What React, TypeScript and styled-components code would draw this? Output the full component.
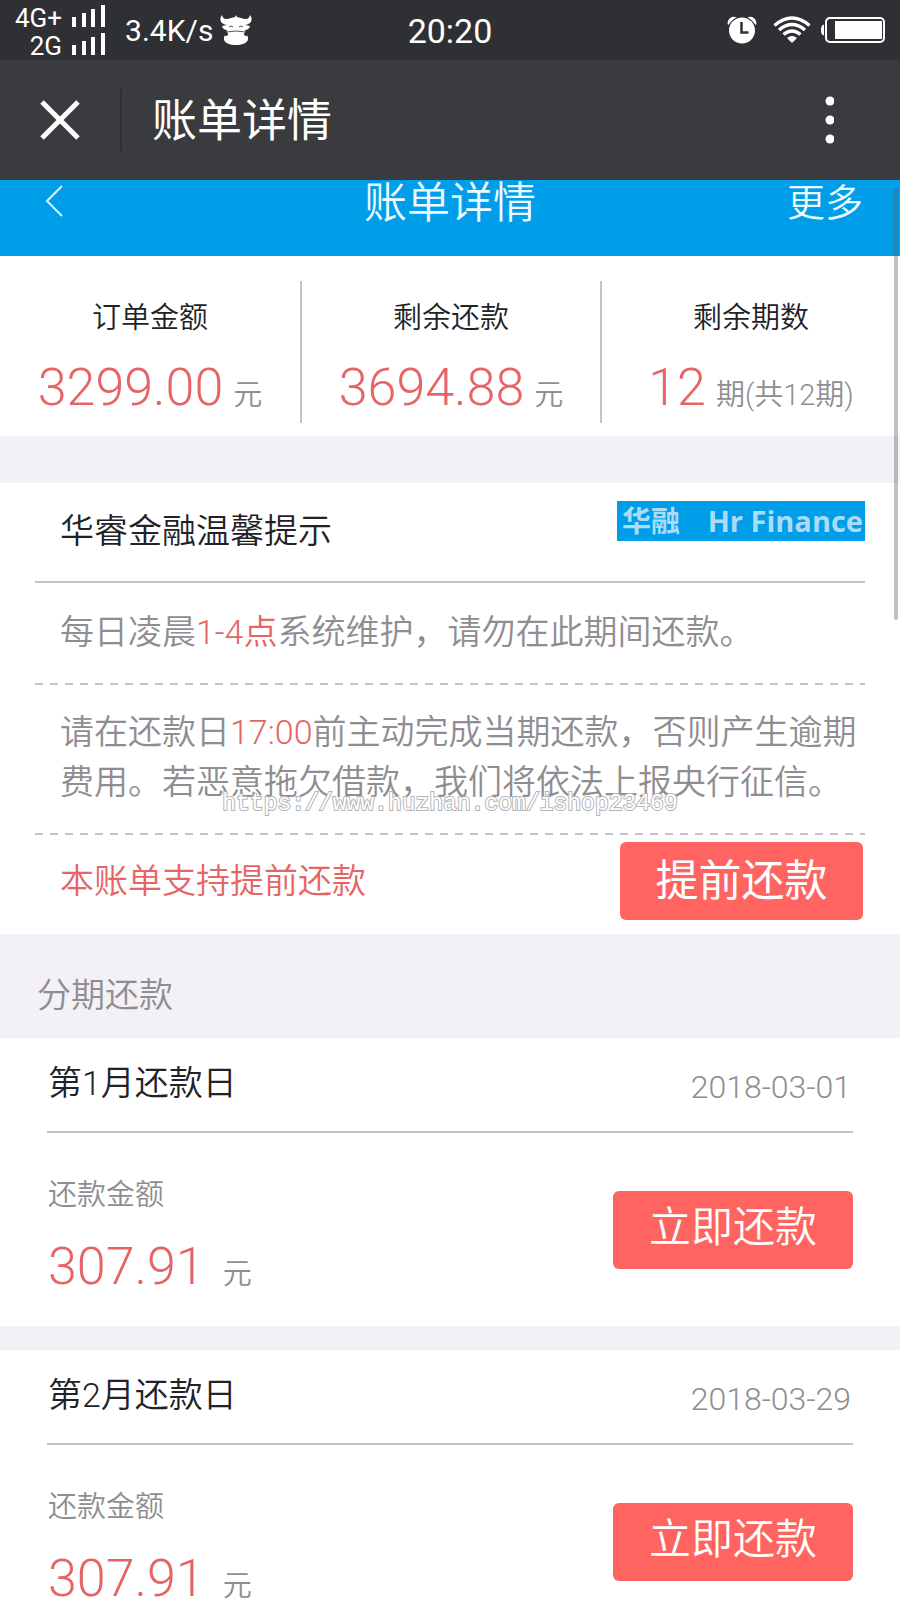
import React from "react";
import styled, { createGlobalStyle } from "styled-components";

const color = {
  statusBar: "#2f3033",
  navBar: "#3a3b3e",
  blue: "#009de9",
  coral: "#ff6461",
  red: "#e66464",
  ink: "#222226",
  muted: "#8e8e92",
  line: "#c4c4c7",
  gap: "#f3f1f5",
};

const GlobalStyle = createGlobalStyle`
  * { box-sizing: border-box; }
  body {
    margin: 0;
    background: ${color.gap};
    font-family: Roboto, "Noto Sans CJK SC", sans-serif;
    font-weight: 350;
    color: ${color.ink};
  }
  h1, h2, h3, p, dl, dt, dd { margin: 0; font-weight: inherit; }
  button { font: inherit; color: inherit; border: 0; padding: 0; background: none; cursor: pointer; }
`;

const Screen = styled.div`
  display: flex;
  flex-direction: column;
  height: 100vh;
  overflow: hidden;
`;

const StatusBar = styled.div`
  display: grid;
  grid-template-columns: 1fr auto 1fr;
  align-items: center;
  flex: none;
  height: 60px;
  padding: 0 15px;
  background: ${color.statusBar};
  color: #fff;
  font-weight: 400;
`;

const StatusGroup = styled.div<{ $end?: boolean }>`
  display: flex;
  align-items: center;
  justify-content: ${(p) => (p.$end ? "flex-end" : "flex-start")};
  gap: ${(p) => (p.$end ? "10px" : "6px")};
`;

const Carriers = styled.div`
  display: flex;
  flex-direction: column;
  margin-right: 12px;
  padding-top: 4px;
`;

const Carrier = styled.div`
  display: flex;
  align-items: baseline;
  justify-content: flex-end;
  gap: 10px;
  font-size: 26px;
  line-height: 28px;
`;

const Speed = styled.span`
  padding-top: 2px;
  font-size: 30px;
  line-height: 36px;
`;

const Clock = styled.time`
  padding-top: 2px;
  font-size: 34px;
  line-height: 40px;
`;

const NavBar = styled.header`
  display: flex;
  align-items: center;
  flex: none;
  height: 120px;
  padding: 0 66px 0 40px;
  background: ${color.navBar};
  color: #fff;
`;

const IconButton = styled.button`
  display: flex;
  align-items: center;
  justify-content: center;
`;

const NavDivider = styled.span`
  width: 2px;
  height: 62px;
  margin: 0 30px 0 40px;
  background: #2e2f32;
`;

const NavTitle = styled.h1`
  flex: 1;
  padding-top: 4px;
  font-size: 45px;
  line-height: 60px;
  font-weight: 400;
`;

const Content = styled.main`
  position: relative;
  flex: 1;
  min-height: 0;
  overflow: hidden;
`;

const ScrollThumb = styled.span`
  position: absolute;
  top: 8px;
  right: 2px;
  width: 4px;
  height: 432px;
  border-radius: 2px;
  background: rgba(90, 100, 105, 0.4);
`;

const PageHeader = styled.div`
  display: grid;
  grid-template-columns: 1fr auto 1fr;
  align-items: center;
  height: 76px;
  padding: 0 37px 30px;
  background: ${color.blue};
  color: #eafaff;
`;

const PageTitle = styled.h2`
  font-size: 43px;
  line-height: 46px;
`;

const BackButton = styled(IconButton)`
  justify-self: start;
  padding: 0 8px 4px;
`;

const MoreButton = styled.button`
  justify-self: end;
  font-size: 38px;
  line-height: 46px;
`;

const Summary = styled.dl`
  display: grid;
  grid-template-columns: repeat(3, 1fr);
  padding: 25px 0 13px;
  background: #fff;
`;

const SummaryItem = styled.div`
  height: 142px;
  padding-top: 17px;
  text-align: center;
  & + & { border-left: 2px solid ${color.line}; }
`;

const SummaryLabel = styled.dt`
  font-size: 29px;
  line-height: 40px;
`;

const SummaryValue = styled.dd`
  margin-top: 20px;
  line-height: 60px;
  white-space: nowrap;
`;

const Amount = styled.span`
  font-size: 52px;
  color: ${color.red};
`;

const Unit = styled.span<{ $wide?: boolean }>`
  margin-left: ${(p) => (p.$wide ? "18px" : "10px")};
  font-size: 29px;
  color: ${color.muted};
`;

const Notice = styled.section`
  position: relative;
  margin-top: 47px;
  padding: 0 35px;
  background: #fff;
`;

const NoticeHead = styled.div`
  display: flex;
  align-items: flex-start;
  justify-content: space-between;
  height: 100px;
  padding: 18px 0 0 25px;
  border-bottom: 2px solid ${color.line};
`;

const NoticeTitle = styled.h3`
  font-size: 34px;
  line-height: 60px;
`;

const Brand = styled.span`
  display: flex;
  align-items: center;
  justify-content: space-between;
  width: 248px;
  height: 40px;
  padding: 0 2px 0 5px;
  background: ${color.blue};
  color: #aadcf8;
  font-family: "Open Sans", "Noto Sans CJK SC", sans-serif;
  font-size: 29px;
  line-height: 40px;
  font-weight: 700;
  white-space: nowrap;
`;

const NoticeList = styled.div`
  padding-top: 2px;
`;

const NoticeText = styled.p`
  padding: 22px 0 28px 25px;
  background: repeating-linear-gradient(90deg, ${color.line} 0 8px, transparent 8px 15px) left bottom / 100% 2px no-repeat;
  font-size: 34px;
  line-height: 50px;
  color: ${color.muted};
`;

const Highlight = styled.span`
  color: ${color.red};
`;

const EarlyRow = styled.div`
  display: flex;
  align-items: center;
  justify-content: space-between;
  height: 99px;
  padding: 0 2px 8px 25px;
  font-size: 34px;
  line-height: 50px;
  color: ${color.red};
`;

const PayButton = styled.button<{ $large?: boolean }>`
  width: ${(p) => (p.$large ? "243px" : "240px")};
  height: 78px;
  padding-bottom: ${(p) => (p.$large ? "0" : "4px")};
  border-radius: 6px;
  background: ${color.coral};
  color: #fff;
  font-size: ${(p) => (p.$large ? "43px" : "42px")};
  line-height: 60px;
  font-weight: ${(p) => (p.$large ? 400 : 350)};
`;

const Watermark = styled.span`
  position: absolute;
  top: 306px;
  left: 0;
  right: 0;
  text-align: center;
  font-family: "Liberation Mono", monospace;
  font-size: 23px;
  line-height: 30px;
  font-weight: 400;
  color: #fff;
  -webkit-text-stroke: 2px #b4b4b6;
  paint-order: stroke fill;
  pointer-events: none;
`;

const SectionTitle = styled.h3`
  height: 104px;
  padding: 36px 37px 0;
  font-size: 34px;
  line-height: 50px;
  color: ${color.muted};
`;

const Instalment = styled.article`
  height: 288px;
  margin-bottom: 24px;
  padding: 0 47px;
  background: #fff;
`;

const InstalmentHead = styled.div`
  display: flex;
  align-items: center;
  justify-content: space-between;
  height: 95px;
  padding: 0 2px 4px 1px;
  border-bottom: 2px solid ${color.line};
`;

const InstalmentTitle = styled.h3`
  font-size: 34px;
  line-height: 50px;
`;

const DueDate = styled.time`
  padding-top: 8px;
  font-size: 32px;
  line-height: 40px;
  color: ${color.muted};
`;

const InstalmentBody = styled.div`
  display: flex;
  align-items: flex-start;
  justify-content: space-between;
  padding: 42px 0 0 1px;
`;

const Due = styled.div`
  display: flex;
  flex-direction: column;
  gap: 22px;
`;

const DueLabel = styled.span`
  font-size: 29px;
  line-height: 40px;
  color: ${color.muted};
`;

const DueAmount = styled.span`
  line-height: 60px;
`;

const ButtonSlot = styled.div`
  padding-top: 16px;
`;

const Signal = () => (
  <svg width="35" height="22" viewBox="0 0 35 22" fill="#fff" aria-hidden="true">
    <rect x="0" y="12" width="4" height="10" />
    <rect x="10" y="8" width="4" height="14" />
    <rect x="19" y="4" width="4" height="18" />
    <rect x="29" y="0" width="4" height="22" />
  </svg>
);

const Bull = () => (
  <svg width="34" height="32" viewBox="0 0 34 32" aria-hidden="true">
    <path
      fill="#fff"
      d="M3 1C0 5 1 10 8 11L3 12C4 15 6 16 8 16L7 20C3 24 4 31 17 31S31 24 27 20L26 16C28 16 30 15 31 12L26 11C33 10 34 5 31 1C30 5 28 6 22 4L18 3L17 1L16 3L12 4C6 6 4 5 3 1Z"
    />
    <path d="M10 13q2-2 4 0M20 13q2-2 4 0M7 18q10-2 20 0" fill="none" stroke="#55565a" strokeWidth="1" />
    <circle cx="7" cy="20" r="2" fill="#2f3033" />
    <circle cx="27" cy="20" r="2" fill="#2f3033" />
  </svg>
);

const Alarm = () => (
  <svg width="36" height="28" viewBox="0 0 36 28" aria-hidden="true">
    <path d="M1 9A6 6 0 0 1 10 2ZM29 9A6 6 0 0 0 20 2Z" fill="#fff" />
    <circle cx="15" cy="14.5" r="14" fill="#2f3033" />
    <circle cx="15" cy="14.5" r="13" fill="#fff" />
    <path d="M14.500 6v10.500h7" fill="none" stroke="#2f3033" strokeWidth="2.500" />
  </svg>
);

const Wifi = () => (
  <svg width="38" height="28" viewBox="0 0 38 28" fill="none" stroke="#fff" strokeWidth="3.400" aria-hidden="true">
    <path d="M1.500 9.500Q19-5.500 36.500 9.500M6 14Q19 3 32 14M10.500 18.500Q19 11.500 27.500 18.500" />
    <path d="M14 22Q19 18 24 22L19 27Z" fill="#fff" stroke="none" />
  </svg>
);

const Battery = () => (
  <svg width="64" height="26" viewBox="0 0 64 26" aria-hidden="true">
    <path d="M3 7.500Q0 8 0 13T3 18.500Z" fill="#fff" />
    <rect x="5" y="1" width="58" height="24" rx="4" fill="none" stroke="#fff" strokeWidth="2" />
    <rect x="14" y="4" width="47" height="18" fill="#fff" />
  </svg>
);

const Close = () => (
  <svg width="40" height="40" viewBox="0 0 40 40" fill="none" stroke="#fff" strokeWidth="5" aria-hidden="true">
    <path d="M2 2L38 38M38 2L2 38" />
  </svg>
);

const Dots = () => (
  <svg width="28" height="50" viewBox="0 0 28 50" fill="#fff" aria-hidden="true">
    <circle cx="24" cy="6" r="4.500" />
    <circle cx="24" cy="25" r="4.500" />
    <circle cx="24" cy="44" r="4.500" />
  </svg>
);

const Back = () => (
  <svg width="20" height="32" viewBox="0 0 20 32" fill="none" stroke="#d8f6ff" strokeWidth="2" aria-hidden="true">
    <path d="M17 1L2 16L17 31" />
  </svg>
);

const summary = [
  { label: "订单金额", value: "3299.00", unit: "元" },
  { label: "剩余还款", value: "3694.88", unit: "元" },
  { label: "剩余期数", value: "12", unit: "期(共12期)" },
];

const instalments = [
  { month: 1, date: "2018-03-01", amount: "307.91" },
  { month: 2, date: "2018-03-29", amount: "307.91" },
];

export default function App() {
  return (
    <Screen>
      <GlobalStyle />
      <StatusBar>
        <StatusGroup>
          <Carriers>
            <Carrier>4G+<Signal /></Carrier>
            <Carrier>2G<Signal /></Carrier>
          </Carriers>
          <Speed>3.4K/s</Speed>
          <Bull />
        </StatusGroup>
        <Clock>20:20</Clock>
        <StatusGroup $end>
          <Alarm />
          <Wifi />
          <Battery />
        </StatusGroup>
      </StatusBar>
      <NavBar>
        <IconButton aria-label="关闭"><Close /></IconButton>
        <NavDivider />
        <NavTitle>账单详情</NavTitle>
        <IconButton aria-label="菜单"><Dots /></IconButton>
      </NavBar>
      <Content>
        <PageHeader>
          <BackButton aria-label="返回"><Back /></BackButton>
          <PageTitle>账单详情</PageTitle>
          <MoreButton>更多</MoreButton>
        </PageHeader>
        <Summary>
          {summary.map((s) => (
            <SummaryItem key={s.label}>
              <SummaryLabel>{s.label}</SummaryLabel>
              <SummaryValue>
                <Amount>{s.value}</Amount>
                <Unit>{s.unit}</Unit>
              </SummaryValue>
            </SummaryItem>
          ))}
        </Summary>
        <Notice>
          <NoticeHead>
            <NoticeTitle>华睿金融温馨提示</NoticeTitle>
            <Brand><span>华融</span><span>Hr Finance</span></Brand>
          </NoticeHead>
          <NoticeList>
            <NoticeText>
              每日凌晨<Highlight>1-4点</Highlight>系统维护，请勿在此期间还款。
            </NoticeText>
            <NoticeText>
              请在还款日<Highlight>17:00</Highlight>前主动完成当期还款，否则产生逾期费用。若恶意拖欠借款，我们将依法上报央行征信。
            </NoticeText>
          </NoticeList>
          <EarlyRow>
            <span>本账单支持提前还款</span>
            <PayButton $large>提前还款</PayButton>
          </EarlyRow>
          <Watermark>https://www.huzhan.com/ishop23469</Watermark>
        </Notice>
        <SectionTitle>分期还款</SectionTitle>
        {instalments.map((item) => (
          <Instalment key={item.month}>
            <InstalmentHead>
              <InstalmentTitle>第{item.month}月还款日</InstalmentTitle>
              <DueDate>{item.date}</DueDate>
            </InstalmentHead>
            <InstalmentBody>
              <Due>
                <DueLabel>还款金额</DueLabel>
                <DueAmount>
                  <Amount>{item.amount}</Amount>
                  <Unit $wide>元</Unit>
                </DueAmount>
              </Due>
              <ButtonSlot>
                <PayButton>立即还款</PayButton>
              </ButtonSlot>
            </InstalmentBody>
          </Instalment>
        ))}
        <ScrollThumb />
      </Content>
    </Screen>
  );
}
